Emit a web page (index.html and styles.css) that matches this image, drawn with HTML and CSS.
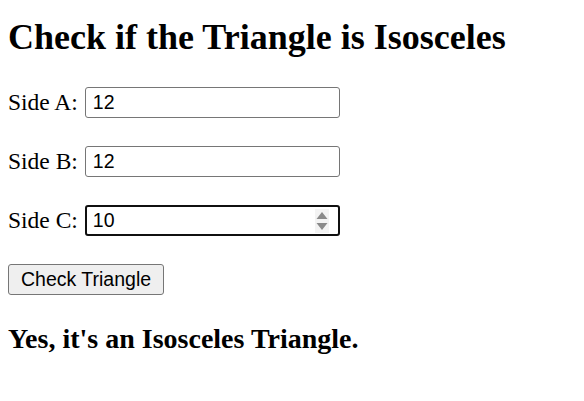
FILE: index.html
```html
<!DOCTYPE html>
<html lang="en">
<head>
<meta charset="utf-8">
<title>Isosceles Triangle Checker</title>
<link rel="stylesheet" href="styles.css">
</head>
<body>
<h1 class="title">Check if the Triangle is Isosceles</h1>
<form class="form">
  <p class="row"><label class="label" for="a">Side A:</label> <span class="field"><input class="num" id="a" type="text" value="12"></span></p>
  <p class="row"><label class="label" for="b">Side B:</label> <span class="field"><input class="num" id="b" type="text" value="12"></span></p>
  <p class="row"><label class="label" for="c">Side C:</label> <span class="field field-focus"><input class="num" id="c" type="text" value="10"><span class="spin"><svg width="14" height="24" viewBox="0 0 14 24"><path d="M1.5 10 L7 3 L12.5 10 Z" fill="#8a8a8a"/><path d="M1.5 14 L12.5 14 L7 21 Z" fill="#8a8a8a"/></svg></span></span></p>
  <p class="row"><button class="btn" type="button">Check Triangle</button></p>
</form>
<h2 class="result">Yes, it's an Isosceles Triangle.</h2>
</body>
</html>
```

FILE: styles.css
```css
html {
  margin: 0;
}
body {
  margin: 0;
  padding: 8px;
  font-family: "Liberation Serif", "Times New Roman", serif;
  color: #000;
  background: #fff;
}
.title {
  font-size: 36px;
  font-weight: bold;
  margin: 9px 0 29px;
  line-height: 1.15;
}
.form {
  margin: 0;
}
.row {
  font-size: 23.5px;
  margin: 0 0 28px;
  display: flex;
  align-items: center;
  gap: 7px;
  height: 31px;
}
.field {
  display: inline-flex;
  align-items: center;
  width: 255px;
  height: 31px;
  box-sizing: border-box;
  border: 1px solid #767676;
  border-radius: 3px;
  background: #fff;
  padding: 0 6px 0 7px;
}
.field-focus {
  border: 2px solid #101010;
  padding: 0 9px 0 6px;
}
.num {
  flex: 1;
  min-width: 0;
  border: 0;
  outline: 0;
  padding: 0;
  font-family: "Liberation Sans", Arial, sans-serif;
  font-size: 19.5px;
  color: #000;
  background: transparent;
}
.spin {
  display: flex;
  background: #f3f3f3;
}
.spin svg {
  display: block;
}
.btn {
  font-family: "Liberation Sans", Arial, sans-serif;
  font-size: 19.5px;
  height: 31px;
  padding: 0 12px;
  background: #efefef;
  border: 1px solid #767676;
  border-radius: 3px;
  color: #000;
}
.result {
  font-size: 28px;
  font-weight: bold;
  margin: 28px 0;
}
```
